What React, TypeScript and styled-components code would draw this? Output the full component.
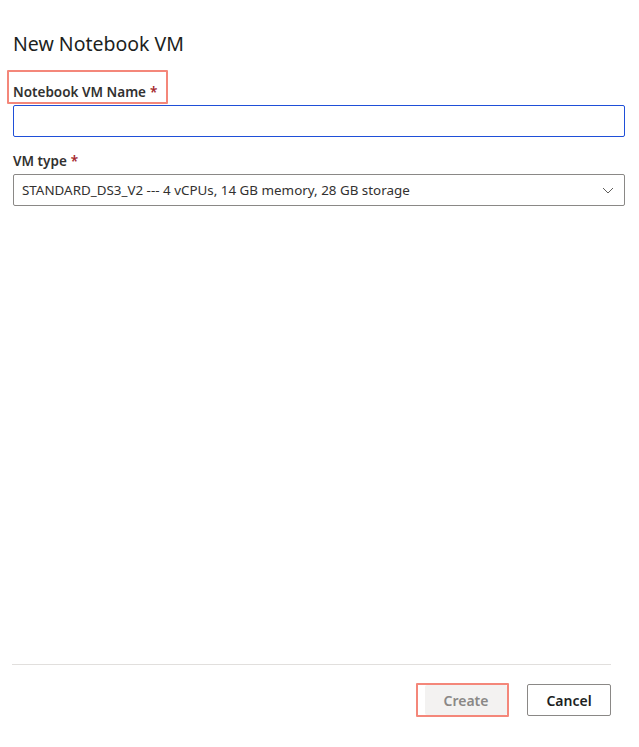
import React from "react";
import styled, { createGlobalStyle } from "styled-components";

const GlobalStyle = createGlobalStyle`
    html, body {
        margin: 0;
        padding: 0;
        background: #ffffff;
    }
    body {
        font-family: "Noto Sans", "Open Sans", Arial, sans-serif;
        color: #323130;
    }
`;

const Panel = styled.div`
    width: 639px;
    height: 747px;
    display: flex;
    flex-direction: column;
    box-sizing: border-box;
`;

const Body = styled.div`
    flex: 1;
    padding: 30px 14px 0 13px;
`;

const Title = styled.h1`
    margin: 0 0 12px 0;
    font-size: 19.5px;
    line-height: 28px;
    font-weight: 400;
    color: #201f1e;
`;

const Highlight = styled.div`
    display: inline-flex;
    align-items: center;
    border: 2px solid #f4877a;
    border-radius: 1px;
`;

const LabelHighlight = styled(Highlight)`
    margin-left: -6px;
    padding: 10px 9px 0 4px;
`;

const Label = styled.label`
    display: block;
    font-size: 13.5px;
    line-height: 20px;
    font-weight: 600;
    color: #323130;
`;

const Required = styled.span`
    color: #a4262c;
    margin-left: 4px;
`;

const Field = styled.div<{ $top: number }>`
    margin-top: ${p => p.$top}px;
`;

const Input = styled.input`
    display: block;
    width: 100%;
    height: 32px;
    box-sizing: border-box;
    margin-top: 1px;
    border: 1px solid #1f4fd8;
    border-radius: 2px;
    outline: none;
    padding: 0 8px;
    font-family: inherit;
    font-size: 13px;
`;

const Select = styled.div`
    margin-top: 3px;
    height: 32px;
    box-sizing: border-box;
    border: 1px solid #8a8886;
    border-radius: 2px;
    display: flex;
    align-items: center;
    justify-content: space-between;
    padding: 0 10px 0 8px;
    font-size: 13.4px;
    color: #323130;
`;

const Chevron = styled.svg`
    width: 12px;
    height: 12px;
`;

const Footer = styled.div`
    padding: 0 28px 30px 12px;
`;

const Divider = styled.div`
    height: 1px;
    background: #e1dfdd;
`;

const Actions = styled.div`
    display: flex;
    justify-content: flex-end;
    align-items: center;
    gap: 18px;
    margin-top: 18px;
`;

const ButtonHighlight = styled(Highlight)`
    padding-left: 7px;
`;

const Button = styled.button<{ $disabled?: boolean }>`
    height: ${p => (p.$disabled ? 30 : 32)}px;
    width: ${p => (p.$disabled ? 82 : 84)}px;
    box-sizing: border-box;
    border-radius: 2px;
    font-family: inherit;
    font-size: 14px;
    font-weight: 600;
    border: ${p => (p.$disabled ? "none" : "1px solid #8a8886")};
    background: ${p => (p.$disabled ? "#f3f2f1" : "#ffffff")};
    color: ${p => (p.$disabled ? "#8a8886" : "#201f1e")};
    cursor: ${p => (p.$disabled ? "default" : "pointer")};
`;

export default function App() {
    return (
        <Panel>
            <GlobalStyle />
            <Body>
                <Title>New Notebook VM</Title>
                <LabelHighlight>
                    <Label>Notebook VM Name<Required>*</Required></Label>
                </LabelHighlight>
                <Input />
                <Field $top={14}>
                    <Label>VM type<Required>*</Required></Label>
                    <Select>
                        <span>STANDARD_DS3_V2 --- 4 vCPUs, 14 GB memory, 28 GB storage</span>
                        <Chevron viewBox="0 0 12 12" fill="none" stroke="#605e5c" strokeWidth="1">
                            <path d="M1 4l5 5 5-5" />
                        </Chevron>
                    </Select>
                </Field>
            </Body>
            <Footer>
                <Divider />
                <Actions>
                    <ButtonHighlight>
                        <Button $disabled>Create</Button>
                    </ButtonHighlight>
                    <Button>Cancel</Button>
                </Actions>
            </Footer>
        </Panel>
    );
}
